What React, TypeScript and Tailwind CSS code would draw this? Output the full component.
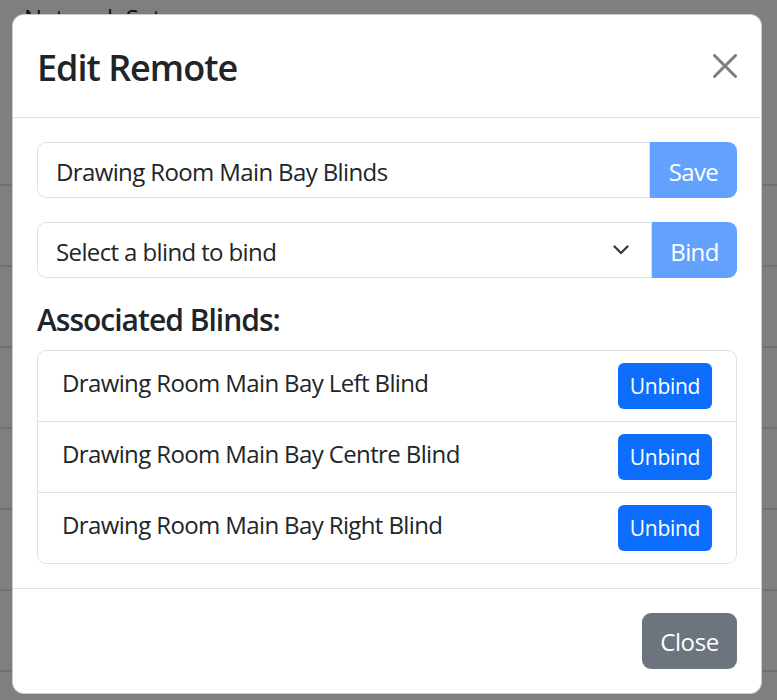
import React from "react";

const blinds = [
  "Drawing Room Main Bay Left Blind",
  "Drawing Room Main Bay Centre Blind",
  "Drawing Room Main Bay Right Blind",
];

export default function App() {
  return (
    <div
      className="relative w-[777px] h-[700px] overflow-hidden bg-white text-[#212529]"
      style={{ fontFamily: '"Open Sans", "Noto Sans", sans-serif' }}
    >
      {/* underlying page */}
      <div className="flex flex-col">
        <div className="h-[184px] px-[24px]">
          <div className="text-[24px] leading-[36px] font-medium">Network Setup</div>
        </div>
        {Array.from({ length: 7 }).map((_, i) => (
          <div key={i} className="h-[81px] border-t-2 border-[#dee2e6]" />
        ))}
      </div>

      {/* backdrop */}
      <div className="absolute inset-0 bg-black/50" />

      {/* modal */}
      <div className="absolute left-[12px] top-[14px] w-[750px] bg-white border border-black/20 rounded-[12px] flex flex-col tracking-[-0.62px]">
        <div className="flex items-center justify-between p-[24px] border-b border-[#dee2e6]">
          <h4 className="text-[36px] leading-[54px] font-semibold tracking-[-1px] translate-y-[2px]">Edit Remote</h4>
          <button className="w-[24px] h-[24px] opacity-50">
            <svg viewBox="0 0 16 16" width="24" height="24" fill="#000">
              <path d="M.293.293a1 1 0 0 1 1.414 0L8 6.586 14.293.293a1 1 0 1 1 1.414 1.414L9.414 8l6.293 6.293a1 1 0 0 1-1.414 1.414L8 9.414l-6.293 6.293a1 1 0 0 1-1.414-1.414L6.586 8 .293 1.707a1 1 0 0 1 0-1.414z" />
            </svg>
          </button>
        </div>

        <div className="p-[24px] flex flex-col">
          <div className="flex h-[56px]">
            <div className="flex-1 flex items-center pt-[4px] px-[18px] border border-[#dee2e6] rounded-l-[9px] text-[24px] leading-[36px]">
              Drawing Room Main Bay Blinds
            </div>
            <button className="w-[87px] pt-[4px] bg-[#62a1fe] text-white text-[24px] leading-[36px] rounded-r-[9px]">
              Save
            </button>
          </div>

          <div className="flex h-[56px] mt-[24px]">
            <div className="flex-1 flex items-center justify-between pl-[18px] pr-[22px] border border-[#dee2e6] rounded-l-[9px] text-[24px] leading-[36px]">
              <span className="translate-y-[2px]">Select a blind to bind</span>
              <svg width="16" height="10" viewBox="0 0 16 10" fill="none">
                <path d="M1.5 1.5 8 8l6.5-6.5" stroke="#343a40" strokeWidth="2.3" strokeLinecap="round" strokeLinejoin="round" />
              </svg>
            </div>
            <button className="w-[85px] pt-[4px] bg-[#62a1fe] text-white text-[24px] leading-[36px] rounded-r-[9px]">
              Bind
            </button>
          </div>

          <h5 className="mt-[24px] mb-[12px] text-[30px] leading-[36px] font-semibold tracking-[-1px]">Associated Blinds:</h5>

          <div className="flex flex-col border border-[#dee2e6] rounded-[9px]">
            {blinds.map((b, i) => (
              <div
                key={b}
                className={
                  "flex items-center justify-between px-[24px] py-[12px] " +
                  (i > 0 ? "border-t border-[#dee2e6]" : "")
                }
              >
                <span className="text-[24px] leading-[36px] -mt-[7px]">{b}</span>
                <button className="w-[94px] h-[46px] pt-[2px] bg-[#0d6efd] text-white text-[21px] leading-[31.5px] rounded-[6px] tracking-[-0.3px]">
                  Unbind
                </button>
              </div>
            ))}
          </div>
        </div>

        <div className="flex justify-end p-[18px] border-t border-[#dee2e6]">
          <button className="m-[6px] w-[95px] h-[56px] pt-[2px] bg-[#6c757d] text-white text-[24px] leading-[36px] rounded-[9px] tracking-[-0.4px]">
            Close
          </button>
        </div>
      </div>
    </div>
  );
}
